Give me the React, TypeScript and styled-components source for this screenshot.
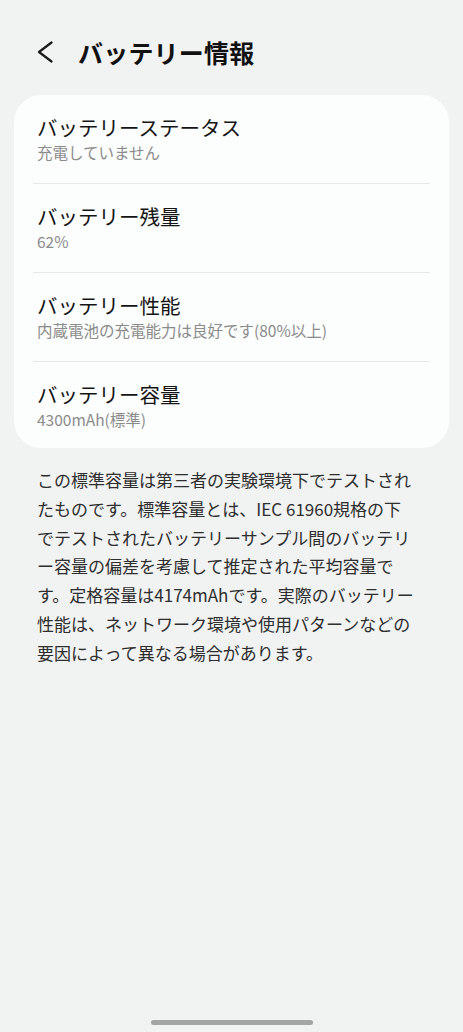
import styled, { createGlobalStyle } from 'styled-components';

const GlobalStyle = createGlobalStyle`
  html, body {
    margin: 0;
    padding: 0;
    background: #f1f2f2;
  }
  body {
    font-family: "Noto Sans CJK JP", "Noto Sans", sans-serif;
    -webkit-font-smoothing: antialiased;
  }
`;

const Page = styled.div`
  min-height: 100vh;
  display: flex;
  flex-direction: column;
  box-sizing: border-box;
  background: #f1f2f2;
`;

const Header = styled.header`
  display: flex;
  align-items: center;
  padding: 37px 0 28px 37px;
  height: 30px;
`;

const BackButton = styled.button`
  display: flex;
  align-items: center;
  justify-content: center;
  padding: 0;
  margin: 0 25px 0 0;
  border: none;
  background: none;
  width: 16px;
  height: 30px;
  color: #1a1a1a;
`;

const Title = styled.h1`
  margin: 0;
  font-size: 25px;
  line-height: 30px;
  font-weight: 700;
  color: #111;
  letter-spacing: 0.2px;
`;

const Card = styled.section`
  margin: 0 14px;
  background: #fcfdfd;
  border-radius: 27px;
  overflow: hidden;
`;

const Row = styled.div`
  padding: 18px 23px 21px;

  &:last-child {
    padding-bottom: 19px;
  }
`;

const Divider = styled.div`
  height: 1px;
  margin: 0 19px;
  background: #e7e8e8;
`;

const RowTitle = styled.div`
  font-size: 20.5px;
  line-height: 28px;
  color: #141414;
`;

const RowValue = styled.div`
  margin-top: 1px;
  font-size: 15.5px;
  line-height: 20px;
  color: #8b8b8b;
`;

const Note = styled.p`
  margin: 18px 0 0 37px;
  font-size: 17px;
  line-height: 28.8px;
  color: #2e2e2e;
  white-space: nowrap;
`;

const HomeBar = styled.div`
  margin: auto auto 7px;
  width: 162px;
  height: 5px;
  border-radius: 3px;
  background: #a3a4a4;
`;

const items = [
  { title: 'バッテリーステータス', value: '充電していません' },
  { title: 'バッテリー残量', value: '62%' },
  { title: 'バッテリー性能', value: '内蔵電池の充電能力は良好です(80%以上)' },
  { title: 'バッテリー容量', value: '4300mAh(標準)' },
];

const noteLines = [
  'この標準容量は第三者の実験環境下でテストされ',
  'たものです。標準容量とは、IEC 61960規格の下',
  'でテストされたバッテリーサンプル間のバッテリ',
  'ー容量の偏差を考慮して推定された平均容量で',
  'す。定格容量は4174mAhです。実際のバッテリー',
  '性能は、ネットワーク環境や使用パターンなどの',
  '要因によって異なる場合があります。',
];

export default function App() {
  return (
    <Page>
      <GlobalStyle />
      <Header>
        <BackButton aria-label="戻る">
          <svg width="16" height="22" viewBox="0 0 16 22" fill="none">
            <polyline
              points="14.5,1.5 2,11 14.5,20.5"
              stroke="currentColor"
              strokeWidth="2.2"
              strokeLinecap="round"
              strokeLinejoin="round"
            />
          </svg>
        </BackButton>
        <Title>バッテリー情報</Title>
      </Header>
      <Card>
        {items.flatMap((item, i) => [
          i > 0 ? <Divider key={`d${i}`} /> : null,
          <Row key={item.title}>
            <RowTitle>{item.title}</RowTitle>
            <RowValue>{item.value}</RowValue>
          </Row>,
        ])}
      </Card>
      <Note>
        {noteLines.map((line, i) => (
          <span key={i}>
            {line}
            {i < noteLines.length - 1 && <br />}
          </span>
        ))}
      </Note>
      <HomeBar />
    </Page>
  );
}
